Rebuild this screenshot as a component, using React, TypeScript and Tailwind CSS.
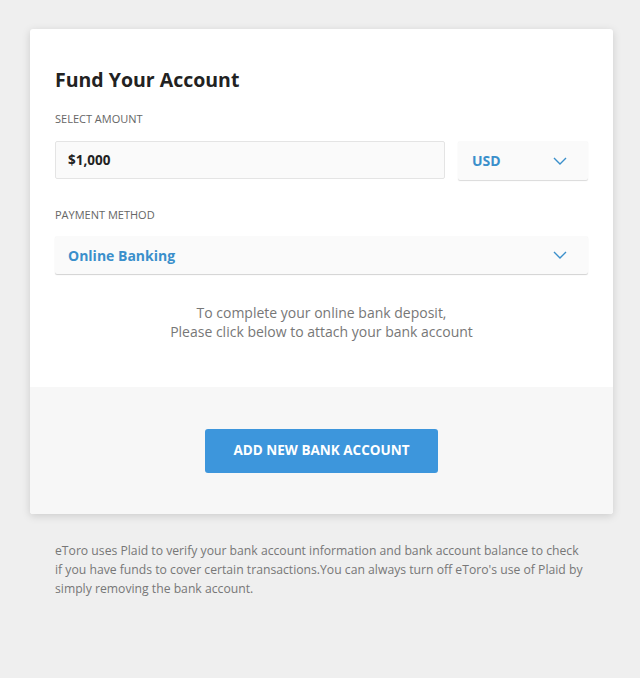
function Chevron() {
  return (
    <svg width="14" height="8" viewBox="0 0 14 8" fill="none" className="text-[#3a8fcb]">
      <path d="M1 1l6 6 6-6" stroke="currentColor" strokeWidth="1.4" />
    </svg>
  );
}

export default function App() {
  return (
    <div className="min-h-[678px] bg-[#efefef] pt-[29px] pl-[30px] pr-[27px] font-['Open_Sans',sans-serif]">
      <div className="bg-white rounded-[3px] shadow-[0_2px_8px_rgba(0,0,0,0.15)] overflow-hidden">
        <div className="px-[25px] pt-[37px] pb-[46px]">
          <h1 className="text-[19.5px] leading-[28px] font-bold text-[#222]">Fund Your Account</h1>
          <div className="mt-[17px] text-[11px] leading-[16px] text-[#666] uppercase">Select Amount</div>
          <div className="mt-[14px] flex gap-[13px]">
            <div className="flex-1 h-[38px] bg-[#fafafa] border border-[#e4e4e4] rounded-[2px] flex items-center px-[12px] text-[13.5px] font-bold text-[#222]">
              $1,000
            </div>
            <div className="w-[130px] h-[39px] bg-[#fafafa] rounded-[2px] shadow-[0_1px_1px_rgba(0,0,0,0.15)] flex items-center justify-between pl-[14px] pr-[21px]">
              <span className="text-[14px] font-bold text-[#3a8fcb]">USD</span>
              <Chevron />
            </div>
          </div>
          <div className="mt-[27px] text-[11px] leading-[16px] text-[#666] uppercase">Payment Method</div>
          <div className="mt-[13px] h-[38px] bg-[#fafafa] rounded-[2px] shadow-[0_1px_1px_rgba(0,0,0,0.18)] flex items-center justify-between pl-[13px] pr-[21px]">
            <span className="text-[14px] font-bold text-[#3a8fcb]">Online Banking</span>
            <Chevron />
          </div>
          <p className="mt-[29px] text-center text-[14px] leading-[19px] text-[#777]">
            To complete your online bank deposit,
            <br />
            Please click below to attach your bank account
          </p>
        </div>
        <div className="bg-[#f7f7f7] h-[127px] flex items-center justify-center">
          <button className="w-[233px] h-[44px] bg-[#3d96dc] rounded-[3px] text-white text-[13.5px] font-bold uppercase">
            Add New Bank Account
          </button>
        </div>
      </div>
      <p className="mt-[27px] px-[25px] text-[12.2px] leading-[19px] text-[#777]">
        eToro uses Plaid to verify your bank account information and bank account balance to check if you have funds to cover certain transactions.You can always turn off eToro's use of Plaid by simply removing the bank account.
      </p>
    </div>
  );
}
